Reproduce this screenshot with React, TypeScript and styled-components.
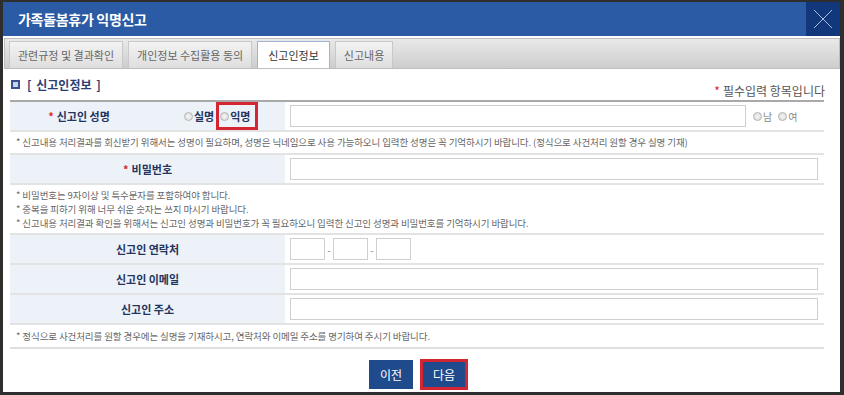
import React from 'react';
import styled, { createGlobalStyle } from 'styled-components';

const GlobalStyle = createGlobalStyle`
    html, body {
        margin: 0;
        padding: 0;
        background: #2e2e2e;
        font-family: "Noto Sans CJK KR", "Noto Sans", sans-serif;
    }
    * { box-sizing: border-box; }
`;

const Dialog = styled.div`
    width: 844px;
    height: 395px;
    padding: 2px 4px 3px 3px;
    display: flex;
    flex-direction: column;
`;

const Panel = styled.div`
    flex: 1;
    background: #ffffff;
    display: flex;
    flex-direction: column;
    overflow: hidden;
`;

const Header = styled.div`
    height: 34px;
    flex-shrink: 0;
    background: #2b5ba4;
    display: flex;
    align-items: center;
    justify-content: space-between;
`;

const Title = styled.h1`
    margin: 0 0 0 15px;
    font-size: 14px;
    font-weight: 700;
    color: #ffffff;
    letter-spacing: -0.3px;
`;

const CloseButton = styled.button`
    width: 34px;
    height: 34px;
    border: 0;
    padding: 0;
    background: #12377a;
    display: flex;
    align-items: center;
    justify-content: center;
`;

const TabBar = styled.div`
    margin: 2px 0 0 1px;
    height: 31px;
    flex-shrink: 0;
    border: 1px solid #bdbdbd;
    background: linear-gradient(#e9e9e9, #cdcdcd);
    display: flex;
    align-items: flex-end;
    gap: 5px;
    padding-left: 4px;
`;

const Tab = styled.div<{ $active?: boolean }>`
    height: 27px;
    padding: 0 ${p => (p.$active ? 10 : 8)}px;
    display: flex;
    align-items: center;
    font-size: 11px;
    color: ${p => (p.$active ? '#333' : '#666')};
    background: ${p => (p.$active ? '#ffffff' : 'linear-gradient(#f3f3f3, #dedede)')};
    border: 1px solid ${p => (p.$active ? '#9fb4d6' : '#c8c8c8')};
    border-bottom: 0;
`;

const Body = styled.div`
    padding: 8px 15px 0 7px;
    display: flex;
    flex-direction: column;
`;

const SectionHead = styled.div`
    display: flex;
    align-items: flex-end;
    justify-content: space-between;
    height: 23px;
    padding-bottom: 1px;
`;

const SectionTitle = styled.div`
    display: flex;
    align-items: center;
    gap: 7px;
    padding-left: 1px;
    font-size: 12px;
    font-weight: 700;
    color: #2c3d73;
    margin-bottom: 6px;
    word-spacing: 2px;
`;

const SquareIcon = styled.span`
    width: 9px;
    height: 9px;
    border: 2px solid #3b4f8c;
    background: #c9d3ea;
`;

const Required = styled.div`
    font-size: 12px;
    color: #555;
`;

const Star = styled.span`
    color: #d8292f;
    margin-right: 3px;
`;

const Table = styled.table`
    width: 814px;
    border-collapse: collapse;
    border-top: 2px solid #a9a9a9;
    border-bottom: 2px solid #dedede;
`;

const Row = styled.tr`
    border-bottom: 2px solid #e3e3e3;
`;

const Label = styled.th<{ $w?: number }>`
    height: 28px;
    width: ${p => (p.$w ? `${p.$w}px` : 'auto')};
    background: #edf2f9;
    font-size: 11px;
    font-weight: 700;
    color: #23345f;
    text-align: center;
    padding: 0;
`;

const RadioCell = styled.td`
    background: #edf2f9;
    font-size: 11px;
    font-weight: 700;
    color: #23345f;
    padding: 0 0 0 36px;
`;

const Field = styled.td`
    padding: 3px 6px 3px 5px;
`;

const FieldLine = styled.div`
    display: flex;
    align-items: center;
`;

const TextBox = styled.div<{ $w?: number }>`
    height: 22px;
    width: ${p => (p.$w ? `${p.$w}px` : '100%')};
    border: 1px solid #cfcfcf;
    background: #fff;
`;

const Dash = styled.span`
    width: 8px;
    text-align: center;
    font-size: 10px;
    color: #888;
`;

const RadioItem = styled.label<{ $bold?: boolean }>`
    display: inline-flex;
    align-items: center;
    gap: 1px;
    font-size: ${p => (p.$bold ? '11px' : '10px')};
    color: ${p => (p.$bold ? '#23345f' : '#888')};
    font-weight: ${p => (p.$bold ? 700 : 400)};
`;

const Dot = styled.span`
    width: 9px;
    height: 9px;
    border-radius: 50%;
    border: 1px solid #b5b5b5;
    background: radial-gradient(#f4f4f4, #d9d9d9);
`;

const Highlight = styled.span`
    display: inline-flex;
    align-items: center;
    height: 28px;
    padding: 0 4px 0 1px;
    margin-left: 2px;
    border: 3px solid #d52432;
`;

const Gender = styled.div`
    display: flex;
    gap: 6px;
    margin-left: 7px;
`;

const Note = styled.td<{ $pad?: string }>`
    padding: ${p => p.$pad ?? '3px 6px 4px 6px'};
    font-size: 9.5px;
    line-height: 14px;
    color: #666;
    letter-spacing: -0.1px;
`;

const Buttons = styled.div`
    display: flex;
    justify-content: center;
    gap: 7px;
    margin-top: 10px;
    padding-left: 2px;
`;

const NavButton = styled.button<{ $marked?: boolean }>`
    width: ${p => (p.$marked ? '48px' : '44px')};
    height: ${p => (p.$marked ? '31px' : '29px')};
    margin-top: ${p => (p.$marked ? '0' : '1px')};
    background: #1f4b8d;
    color: #fff;
    font-family: inherit;
    font-size: 12px;
    border: ${p => (p.$marked ? '3px solid #d32532' : '0')};
    padding: 0;
`;

const Radio = ({ text, bold }: { text: string; bold?: boolean }) => (
    <RadioItem $bold={bold}>
        <Dot />
        {text}
    </RadioItem>
);

const App: React.FC = () => (
    <>
        <GlobalStyle />
        <Dialog>
            <Panel>
                <Header>
                    <Title>가족돌봄휴가 익명신고</Title>
                    <CloseButton aria-label="닫기">
                        <svg width="20" height="20" viewBox="0 0 20 20">
                            <path d="M1 1 L19 19 M19 1 L1 19" stroke="#a9bde0" strokeWidth="1" fill="none" />
                        </svg>
                    </CloseButton>
                </Header>
                <TabBar>
                    <Tab>관련규정 및 결과확인</Tab>
                    <Tab>개인정보 수집활용 동의</Tab>
                    <Tab $active>신고인정보</Tab>
                    <Tab>신고내용</Tab>
                </TabBar>
                <Body>
                    <SectionHead>
                        <SectionTitle>
                            <SquareIcon />[ 신고인정보 ]
                        </SectionTitle>
                        <Required>
                            <Star>*</Star>필수입력 항목입니다
                        </Required>
                    </SectionHead>
                    <Table>
                        <tbody>
                            <Row>
                                <Label $w={138}><Star>*</Star>신고인 성명</Label>
                                <RadioCell style={{ width: 137 }}>
                                    <FieldLine>
                                        <Radio text="실명" bold />
                                        <Highlight><Radio text="익명" bold /></Highlight>
                                    </FieldLine>
                                </RadioCell>
                                <Field>
                                    <FieldLine>
                                        <TextBox $w={456} />
                                        <Gender>
                                            <Radio text="남" />
                                            <Radio text="여" />
                                        </Gender>
                                    </FieldLine>
                                </Field>
                            </Row>
                            <Row>
                                <Note colSpan={3}>
                                    * 신고내용 처리결과를 회신받기 위해서는 성명이 필요하며, 성명은 닉네임으로 사용 가능하오니 입력한 성명은 꼭 기억하시기 바랍니다. (정식으로 사건처리 원할 경우 실명 기재)
                                </Note>
                            </Row>
                            <Row>
                                <Label colSpan={2}><Star>*</Star>비밀번호</Label>
                                <Field><TextBox /></Field>
                            </Row>
                            <Row>
                                <Note colSpan={3} $pad="3px 6px 3px 6px">
                                    * 비밀번호는 9자이상 및 특수문자를 포함하여야 합니다.<br />
                                    * 중복을 피하기 위해 너무 쉬운 숫자는 쓰지 마시기 바랍니다.<br />
                                    * 신고내용 처리결과 확인을 위해서는 신고인 성명과 비밀번호가 꼭 필요하오니 입력한 신고인 성명과 비밀번호를 기억하시기 바랍니다.
                                </Note>
                            </Row>
                            <Row>
                                <Label colSpan={2}>신고인 연락처</Label>
                                <Field>
                                    <FieldLine>
                                        <TextBox $w={35} />
                                        <Dash>-</Dash>
                                        <TextBox $w={35} />
                                        <Dash>-</Dash>
                                        <TextBox $w={35} />
                                    </FieldLine>
                                </Field>
                            </Row>
                            <Row>
                                <Label colSpan={2}>신고인 이메일</Label>
                                <Field><TextBox /></Field>
                            </Row>
                            <Row>
                                <Label colSpan={2}>신고인 주소</Label>
                                <Field><TextBox /></Field>
                            </Row>
                            <tr>
                                <Note colSpan={3} $pad="4px 6px 4px 6px">
                                    * 정식으로 사건처리를 원할 경우에는 실명을 기재하시고, 연락처와 이메일 주소를 명기하여 주시기 바랍니다.
                                </Note>
                            </tr>
                        </tbody>
                    </Table>
                    <Buttons>
                        <NavButton>이전</NavButton>
                        <NavButton $marked>다음</NavButton>
                    </Buttons>
                </Body>
            </Panel>
        </Dialog>
    </>
);

export default App;
